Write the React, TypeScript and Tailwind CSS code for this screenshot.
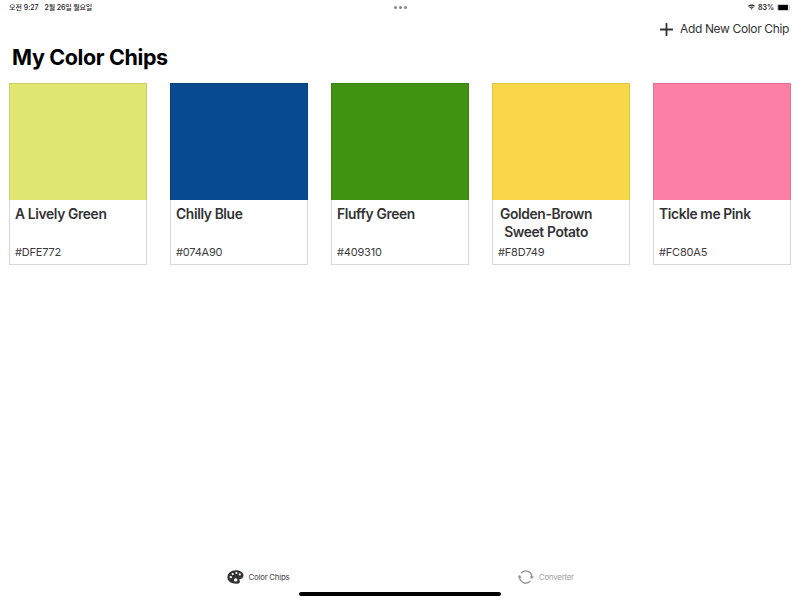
type Chip = { name: string[]; hex: string; fill: string; edge: string };

const chips: Chip[] = [
  { name: ["A Lively Green"], hex: "#DFE772", fill: "bg-[#dfe772]", edge: "border-[#c9d06a]" },
  { name: ["Chilly Blue"], hex: "#074A90", fill: "bg-[#074a90]", edge: "border-[#064382]" },
  { name: ["Fluffy Green"], hex: "#409310", fill: "bg-[#409310]", edge: "border-[#3a850f]" },
  { name: ["Golden-Brown", "Sweet Potato"], hex: "#F8D749", fill: "bg-[#f8d749]", edge: "border-[#dfc242]" },
  { name: ["Tickle me Pink"], hex: "#FC80A5", fill: "bg-[#fc80a5]", edge: "border-[#e37395]" },
];

function StatusBar() {
  return (
    <header className="grid h-[14px] grid-cols-3 items-center pl-[9px] pr-[10px] text-[7px] font-semibold leading-none text-[#222]">
      <div className="flex gap-[6px] whitespace-pre font-medium">
        <span>오전 9:27</span>
        <span className="tracking-[-0.15px]">2월 26일 월요일</span>
      </div>
      <div className="flex justify-center gap-[2px] pl-px">
        <i className="size-[3px] rounded-full bg-[#888]" />
        <i className="size-[3px] rounded-full bg-[#888]" />
        <i className="size-[3px] rounded-full bg-[#888]" />
      </div>
      <div className="flex items-center justify-end gap-[3px]">
        <svg className="h-[6px] w-[7px]" viewBox="0 0 14 11">
          <path fill="#222" d="M0 3.600C4 -.4 10 -.4 14 3.600L12.600 5C9.500 2 4.500 2 1.400 5ZM2.500 6.100C5 3.700 9 3.700 11.500 6.100L10 7.600C8.300 6.100 5.700 6.100 4 7.600ZM5 8.600Q7 7 9 8.600L7 10.800Z" />
        </svg>
        <span>83%</span>
        <svg className="h-[7px] w-[14px]" viewBox="0 0 14 7">
          <rect x=".4" y=".4" width="12" height="6.200" rx="1.600" fill="none" stroke="#aaa" strokeWidth=".7" />
          <rect x="1.200" y="1" width="9.800" height="5" rx=".8" fill="#000" />
          <path d="M13 2.500Q14 3.500 13 4.500Z" fill="#aaa" />
        </svg>
      </div>
    </header>
  );
}

function ChipCard({ chip }: { chip: Chip }) {
  return (
    <article className="flex h-[182px] w-[138px] flex-col">
      <div className={`h-[117px] border-x border-t ${chip.fill} ${chip.edge}`} />
      <div className="flex flex-1 flex-col justify-between border-x border-b border-[#d8d8d8] pb-[5px] pl-[5px] pt-[5px] text-[#333]">
        <h2 className={`w-fit whitespace-nowrap text-[13.8px] font-semibold leading-[18px] tracking-[-0.36px] ${chip.name.length > 1 ? "pl-[2px] text-center" : ""}`}>
          {chip.name.map((line) => (
            <span key={line} className="block">{line}</span>
          ))}
        </h2>
        <p className="text-[11px] leading-[14px] tracking-[-0.2px] text-[#3c3c3c]">{chip.hex}</p>
      </div>
    </article>
  );
}

export default function App() {
  return (
    <div className="flex h-[600px] w-[801px] flex-col overflow-hidden bg-white font-['Inter','Noto_Sans_CJK_KR',sans-serif]">
      <StatusBar />
      <div className="flex h-[30px] items-center justify-end pr-[12px]">
        <button className="flex items-center gap-[7px] text-[12px] tracking-[-0.36px] text-[#333]">
          <svg className="size-[13px]" viewBox="0 0 13 13" stroke="#333" strokeWidth="1.800" strokeLinecap="round">
            <path d="M6.500 .6V12.400M.6 6.500H12.400" />
          </svg>
          <span>Add New Color Chip</span>
        </button>
      </div>
      <h1 className="h-[39px] pl-[12px] text-[21.5px] font-bold leading-[26px] tracking-[-0.37px] text-black">My Color Chips</h1>
      <main className="flex flex-1 items-start gap-[23px] pl-[9px]">
        {chips.map((chip) => (
          <ChipCard key={chip.hex} chip={chip} />
        ))}
      </main>
      <nav className="flex h-[28px] items-center text-[7.8px] tracking-[-0.2px]">
        <button className="ml-[227px] flex w-[291px] items-center gap-[4.5px] text-[#444]">
          <svg className="h-[14px] w-[17px]" viewBox="0 0 17 14">
            <path fill="#333" d="M9 .3C13.500 .3 16.500 2.600 16.500 5.400C16.500 8 14.500 8.700 13.100 8.900C12 9.100 12.300 9.900 12.700 10.700C13.600 12.600 12 13.700 9.300 13.700C4.200 13.700 .4 11.300 .4 7.300C.4 3.300 4 .3 9 .3Z" />
            <g fill="#fff">
              <circle cx="3.800" cy="7.100" r="1.200" />
              <circle cx="5.700" cy="4.100" r="1.100" />
              <circle cx="9.400" cy="3" r="1.100" />
              <circle cx="12.800" cy="4.400" r="1.100" />
              <circle cx="8.700" cy="9.900" r="1.700" />
            </g>
          </svg>
          <span className="pt-[2px]">Color Chips</span>
        </button>
        <button className="flex items-center gap-[4px] text-[#a0a0a0]">
          <svg className="h-[14px] w-[17px]" viewBox="0 0 17 14" fill="none" stroke="#909090" strokeWidth="1.200" strokeLinecap="round" strokeLinejoin="round">
            <path d="M3.400 2.700A6.200 6.200 0 0 1 13.900 7M12.100 11.300A6.200 6.200 0 0 1 1.600 7" />
            <path fill="#909090" d="M12.400 6.700H15.400L13.900 8.600ZM.1 7.300H3.100L1.600 5.400Z" strokeWidth=".6" />
          </svg>
          <span className="pt-[2px]">Converter</span>
        </button>
      </nav>
      <footer className="flex h-[9px] items-start justify-center pr-px pt-px">
        <div className="h-[3.500px] w-[202px] rounded-full bg-black" />
      </footer>
    </div>
  );
}
